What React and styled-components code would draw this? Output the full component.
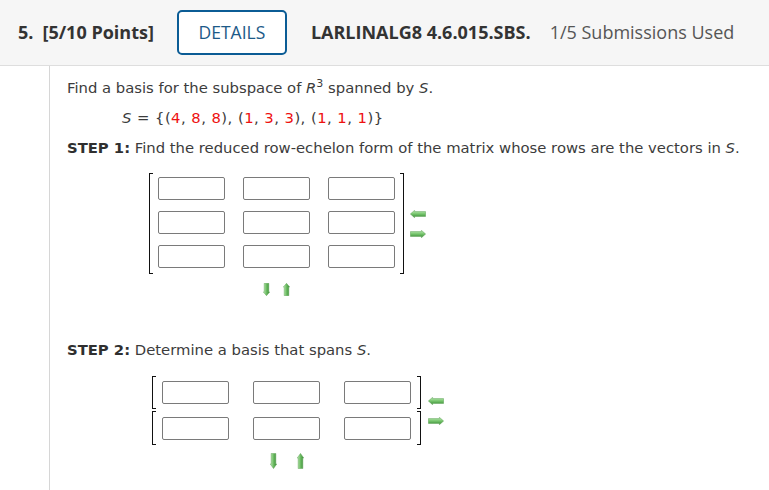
import React from "react";
import styled, { createGlobalStyle } from "styled-components";

const Global = createGlobalStyle`
  html, body { margin: 0; padding: 0; background: #fff; }
  body { width: 769px; height: 490px; overflow: hidden; }
`;

const Page = styled.div`
  width: 769px;
  height: 490px;
  display: flex;
  flex-direction: column;
`;

const Header = styled.header`
  height: 66px;
  box-sizing: border-box;
  background: #f6f6f6;
  border-bottom: 1px solid #dedede;
  display: flex;
  align-items: center;
  padding: 0 0 1px 18px;
  font-family: "Open Sans", "Liberation Sans", sans-serif;
  font-size: 18px;
  color: #333;
`;

const Num = styled.span`
  font-weight: 700;
  margin-right: 9px;
`;

const Points = styled.span`
  font-weight: 700;
`;

const DetailsButton = styled.button`
  margin-left: 23px;
  width: 110px;
  height: 45px;
  box-sizing: border-box;
  border: 2px solid #0b5c95;
  border-radius: 5px;
  background: #fff;
  color: #1c5a88;
  font-family: "Open Sans", "Liberation Sans", sans-serif;
  font-size: 17.5px;
  font-weight: 500;
  padding: 0;
`;

const Title = styled.span`
  margin-left: 24px;
  font-weight: 700;
`;

const Subs = styled.span`
  margin-left: 19px;
  color: #555;
`;

const Body = styled.div`
  flex: 1;
  display: flex;
`;

const Rail = styled.div`
  width: 49px;
  border-right: 1px solid #d6d6d6;
`;

const Content = styled.div`
  padding: 12px 0 0 17px;
  font-family: "DejaVu Sans", Verdana, sans-serif;
  font-size: 14.8px;
  color: #3c3c3c;
`;

const Line = styled.div`
  height: 30px;
  line-height: 20px;
  padding-left: ${(p) => p.indent || 0}px;
  margin-top: ${(p) => p.top || 0}px;
  letter-spacing: ${(p) => p.spacing || 0}px;
  white-space: nowrap;
`;

const Var = styled.i`
  font-style: italic;
`;

const Sup = styled.sup`
  font-size: 11px;
  vertical-align: 6px;
  line-height: 0;
`;

const Red = styled.span`
  color: #ee1111;
`;

const Strong = styled.b`
  font-weight: 700;
  color: #2f2f2f;
`;

const MatrixBlock = styled.div`
  margin-left: ${(p) => p.left}px;
  margin-top: ${(p) => p.top}px;
  display: inline-flex;
  flex-direction: column;
`;

const MatrixRow = styled.div`
  display: flex;
  align-items: center;
  margin-top: ${(p) => p.top || 0}px;
`;

const Bracket = styled.span`
  align-self: stretch;
  width: 3px;
  border: 1.5px solid #111;
  ${(p) => (p.side === "left" ? "border-right: none;" : "border-left: none;")}
`;

const Grid = styled.div`
  display: grid;
  grid-template-columns: repeat(3, 67px);
  column-gap: ${(p) => p.colGap}px;
  row-gap: 11px;
  padding: ${(p) => p.pad};
`;

const Cell = styled.input`
  width: 67px;
  height: 23px;
  box-sizing: border-box;
  border: 1px solid #7a7a7a;
  border-radius: 2px;
  background: #fff;
  margin: 0;
  padding: 0;
`;

const Stack = styled.div`
  display: flex;
  flex-direction: column;
`;

const SideArrows = styled.div`
  display: flex;
  flex-direction: column;
  gap: ${(p) => p.gap}px;
  margin-left: ${(p) => p.left}px;
`;

const BottomArrows = styled.div`
  display: flex;
  justify-content: center;
  gap: ${(p) => p.gap}px;
  margin-top: ${(p) => p.top}px;
  padding-right: ${(p) => p.shift}px;
`;

const HArrow = ({ dir }) => (
  <svg width="16" height="8" viewBox="0 0 16 8" style={{ display: "block" }}>
    <defs>
      <linearGradient id="hg" x1="0" y1="0" x2="0" y2="1">
        <stop offset="0" stopColor="#c8efbf" />
        <stop offset="0.45" stopColor="#7cc972" />
        <stop offset="1" stopColor="#358a32" />
      </linearGradient>
    </defs>
    <polygon
      points={
        dir === "left"
          ? "0.4,4 4.6,0.3 4.6,1.6 15.6,1.6 15.6,6.4 4.6,6.4 4.6,7.7"
          : "15.6,4 11.4,0.3 11.4,1.6 0.4,1.6 0.4,6.4 11.4,6.4 11.4,7.7"
      }
      fill="url(#hg)"
      stroke="#5a9f53"
      strokeWidth="0.5"
    />
  </svg>
);

const VArrow = ({ dir, h }) => (
  <svg width="7" height={h} viewBox="0 0 7 16" preserveAspectRatio="none" style={{ display: "block" }}>
    <defs>
      <linearGradient id="vg" x1="0" y1="0" x2="1" y2="0">
        <stop offset="0" stopColor="#c8efbf" />
        <stop offset="0.45" stopColor="#72c068" />
        <stop offset="1" stopColor="#358a32" />
      </linearGradient>
    </defs>
    <polygon
      points={
        dir === "down"
          ? "1.2,0.4 5.8,0.4 5.8,11 6.7,11 3.5,15.6 0.3,11 1.2,11"
          : "1.2,15.6 5.8,15.6 5.8,5 6.7,5 3.5,0.4 0.3,5 1.2,5"
      }
      fill="url(#vg)"
      stroke="#5a9f53"
      strokeWidth="0.5"
    />
  </svg>
);

const cells = (n) => Array.from({ length: n }, (_, i) => <Cell key={i} />);

export default function App() {
  return (
    <Page>
      <Global />
      <Header>
        <Num>5.</Num>
        <Points>[5/10 Points]</Points>
        <DetailsButton>DETAILS</DetailsButton>
        <Title>LARLINALG8 4.6.015.SBS.</Title>
        <Subs>1/5 Submissions Used</Subs>
      </Header>
      <Body>
        <Rail />
        <Content>
          <Line>
            Find a basis for the subspace of <Var>R</Var>
            <Sup>3</Sup> spanned by <Var>S</Var>.
          </Line>
          <Line indent={55} spacing={0.45}>
            <Var>S</Var> = {"{"}(<Red>4</Red>, <Red>8</Red>, <Red>8</Red>), (<Red>1</Red>, <Red>3</Red>, <Red>3</Red>), (
            <Red>1</Red>, <Red>1</Red>, <Red>1</Red>){"}"}
          </Line>
          <Line>
            <Strong>STEP 1:</Strong> Find the reduced row-echelon form of the matrix whose rows are the vectors in <Var>S</Var>.
          </Line>

          <MatrixBlock left={82} top={5}>
            <MatrixRow>
              <Bracket side="left" />
              <Grid colGap={18} pad="4px 5px 6px 5px">
                {cells(9)}
              </Grid>
              <Bracket side="right" />
              <SideArrows gap={12} left={6}>
                <HArrow dir="left" />
                <HArrow dir="right" />
              </SideArrows>
            </MatrixRow>
            <BottomArrows top={9} gap={13} shift={22}>
              <VArrow dir="down" h={13} />
              <VArrow dir="up" h={13} />
            </BottomArrows>
          </MatrixBlock>

          <Line top={44}>
            <Strong>STEP 2:</Strong> Determine a basis that spans <Var>S</Var>.
          </Line>

          <MatrixBlock left={85} top={6}>
            <MatrixRow>
              <Stack>
                <MatrixRow>
                  <Bracket side="left" />
                  <Grid colGap={24} pad="5px 6px 5px 6px">
                    {cells(3)}
                  </Grid>
                  <Bracket side="right" />
                </MatrixRow>
                <MatrixRow top={2}>
                  <Bracket side="left" />
                  <Grid colGap={24} pad="6px 6px 5px 6px">
                    {cells(3)}
                  </Grid>
                  <Bracket side="right" />
                </MatrixRow>
              </Stack>
              <SideArrows gap={12} left={7}>
                <HArrow dir="left" />
                <HArrow dir="right" />
              </SideArrows>
            </MatrixRow>
            <BottomArrows top={8} gap={20} shift={23}>
              <VArrow dir="down" h={16} />
              <VArrow dir="up" h={16} />
            </BottomArrows>
          </MatrixBlock>
        </Content>
      </Body>
    </Page>
  );
}
